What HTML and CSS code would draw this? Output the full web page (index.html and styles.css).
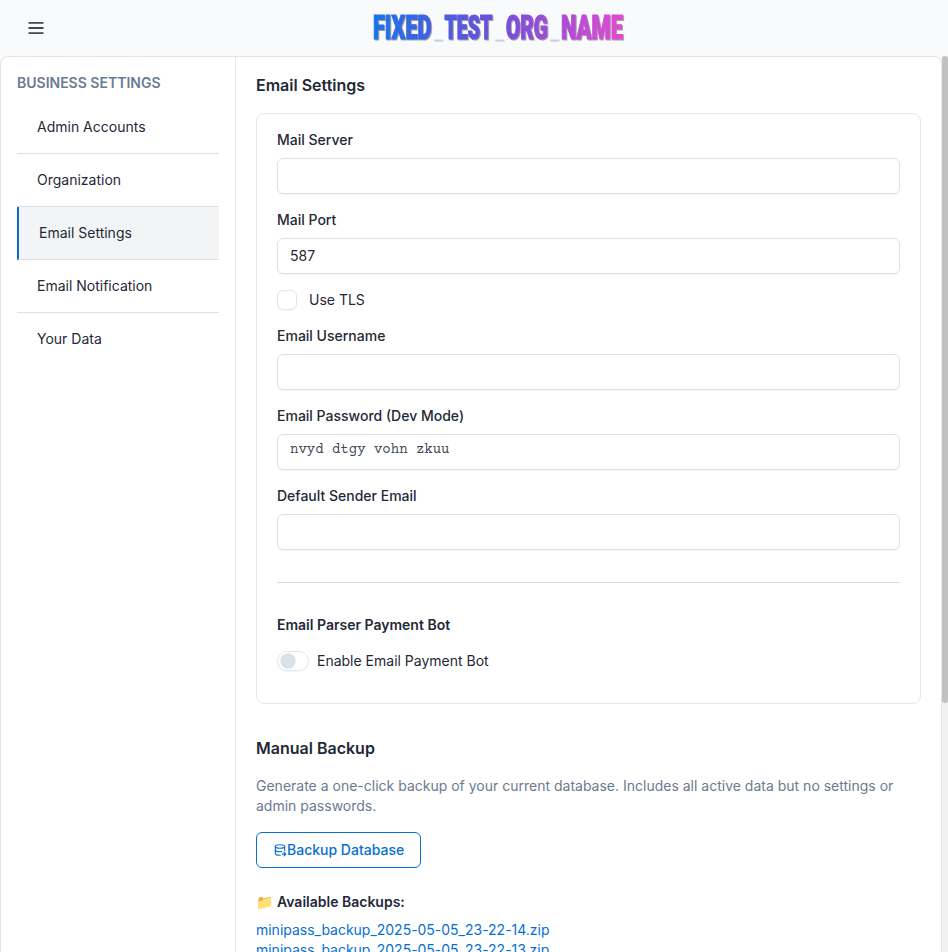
FILE: index.html
```html
<!DOCTYPE html>
<html lang="en">
<head>
<meta charset="utf-8">
<title>Email Settings</title>
<link rel="stylesheet" href="styles.css">
</head>
<body>
<header class="topbar">
  <button class="menu" aria-label="Menu">
    <svg width="24" height="24" viewBox="0 0 24 24" fill="none" stroke="currentColor" stroke-width="1.8"><path d="M4.500 6.800h15M4.500 12h15M4.500 17.200h15"/></svg>
  </button>
  <svg class="brand" width="260" height="50" viewBox="0 0 260 50">
    <defs>
      <linearGradient id="brand-fill" gradientUnits="userSpaceOnUse" x1="4" y1="0" x2="256" y2="0">
        <stop offset="0" stop-color="#1a73e8"/><stop offset=".5" stop-color="#6f4edb"/><stop offset="1" stop-color="#e44ad2"/>
      </linearGradient>
    </defs>
    <text class="word" y="39"><tspan x="5" textLength="58.500" lengthAdjust="spacingAndGlyphs">FIXED</tspan><tspan class="gap" x="66" y="38.500" textLength="9" lengthAdjust="spacingAndGlyphs">_</tspan><tspan x="76.500" y="39" textLength="48" lengthAdjust="spacingAndGlyphs">TEST</tspan><tspan class="gap" x="127" y="38.500" textLength="9" lengthAdjust="spacingAndGlyphs">_</tspan><tspan x="138" y="39" textLength="42" lengthAdjust="spacingAndGlyphs">ORG</tspan><tspan class="gap" x="182" y="38.500" textLength="9" lengthAdjust="spacingAndGlyphs">_</tspan><tspan x="193" y="39" textLength="62" lengthAdjust="spacingAndGlyphs">NAME</tspan></text>
  </svg>
</header>
<div class="shell">
  <div class="card">
    <nav class="sidebar">
      <h4 class="side-title">BUSINESS SETTINGS</h4>
      <a class="item">Admin Accounts</a>
      <a class="item">Organization</a>
      <a class="item active">Email Settings</a>
      <a class="item">Email Notification</a>
      <a class="item">Your Data</a>
    </nav>
    <main class="content">
      <h3 class="heading">Email Settings</h3>
      <section class="panel">
        <div class="field"><label class="label">Mail Server</label><div class="input"></div></div>
        <div class="field"><label class="label">Mail Port</label><div class="input">587</div></div>
        <div class="check"><span class="box"></span>Use TLS</div>
        <div class="field"><label class="label">Email Username</label><div class="input"></div></div>
        <div class="field"><label class="label">Email Password (Dev Mode)</label><div class="input mono">nvyd dtgy vohn zkuu</div></div>
        <div class="field"><label class="label">Default Sender Email</label><div class="input"></div></div>
        <hr class="rule">
        <h4 class="subhead">Email Parser Payment Bot</h4>
        <div class="toggle"><span class="switch"></span>Enable Email Payment Bot</div>
      </section>
      <h3 class="heading backup">Manual Backup</h3>
      <p class="desc">Generate a one-click backup of your current database. Includes all active data but no settings or admin passwords.</p>
      <button class="btn">
        <svg width="14" height="14" viewBox="0 0 24 24" fill="none" stroke="currentColor" stroke-width="2" stroke-linecap="round" stroke-linejoin="round"><ellipse cx="12" cy="6" rx="8" ry="3"/><path d="M4 6v6c0 1.660 3.580 3 8 3 1.120 0 2.180-.09 3.150-.24M20 13V6"/><path d="M4 12v6c0 1.660 3.580 3 8 3 .16 0 .32 0 .48-.01M16 19h6M19 16l3 3-3 3"/></svg>Backup Database</button>
      <h4 class="available"><span class="folder">📁</span> Available Backups:</h4>
      <div class="files">
        <a>minipass_backup_2025-05-05_23-22-14.zip</a>
        <a>minipass_backup_2025-05-05_23-22-13.zip</a>
      </div>
    </main>
  </div>
  <div class="track"><div class="thumb"></div></div>
</div>
</body>
</html>
```

FILE: styles.css
```css
* { box-sizing: border-box; }
body {
  margin: 0;
  height: 952px;
  overflow: hidden;
  display: flex;
  flex-direction: column;
  background: #f9fafb;
  color: #1f2937;
  font: 14px/20px Inter, "Liberation Sans", sans-serif;
}
h3, h4, p { margin: 0; }
.topbar {
  flex: none;
  height: 56px;
  display: grid;
  grid-template-columns: 368px 260px;
  align-items: start;
}
.menu {
  margin: 16px 0 0 24px;
  width: 24px;
  height: 24px;
  padding: 0;
  border: 0;
  background: none;
  color: #3f4857;
}
.brand { display: block; }
.word {
  font: 900 32.5px Roboto, sans-serif;
  fill: url(#brand-fill);
  stroke: url(#brand-fill);
  stroke-width: 1.2px;
  filter: drop-shadow(1px 1px .5px rgba(0, 0, 0, .35));
}
.gap { fill: #8b7bd0; fill-opacity: .3; stroke: none; font-size: 20px; font-weight: 400; }
.shell { flex: 1; min-height: 0; display: flex; }
.card {
  width: 942px;
  display: flex;
  background: #fff;
  border: 1px solid #e2e6ea;
  border-bottom: 0;
  border-radius: 8px 8px 0 0;
  overflow: hidden;
}
.sidebar {
  flex: none;
  width: 235px;
  padding: 16px;
  border-right: 1px solid #e6e7ec;
}
.side-title { font-size: 14px; line-height: 20px; font-weight: 600; color: #6c7a91; margin-bottom: 8px; }
.item { display: block; height: 53px; padding: 16px 20px; border-bottom: 1px solid #dce1e7; }
.item:last-child { border-bottom: 0; }
.active { background: #f3f4f6; border-left: 2px solid #066fd1; }
.content { width: 705px; padding: 16px 20px; }
.heading { font-size: 16px; line-height: 24px; font-weight: 600; }
.panel {
  height: 591px;
  margin-top: 16px;
  padding: 16px 20px;
  border: 1px solid #e6e7ec;
  border-radius: 8px;
}
.field { margin-bottom: 16px; }
.label { display: block; font-weight: 500; margin-bottom: 8px; }
.input {
  height: 36px;
  padding: 7px 12px;
  border: 1px solid #dce1e7;
  border-radius: 6px;
  box-shadow: 0 1px 1px rgba(31, 41, 55, .06);
}
.mono { font: 14px/16px "Courier 10 Pitch", "Courier Prime", "Nimbus Mono PS", "FreeMono", "Liberation Mono", monospace; white-space: pre; color: #3f4857; }
.check { display: flex; gap: 12px; margin-bottom: 16px; }
.box { width: 20px; height: 20px; border: 1px solid #e3e5ea; border-radius: 6px; box-shadow: 0 1px 1px rgba(31, 41, 55, .05); }
.rule { height: 1px; margin: 32px 0; border: 0; background: #d9dcdf; }
.subhead { font-size: 14px; line-height: 20px; font-weight: 600; margin-bottom: 16px; }
.toggle { display: flex; gap: 8px; }
.switch {
  width: 32px;
  height: 20px;
  border: 1px solid #e3e5ea;
  border-radius: 10px;
  background: radial-gradient(circle at 10px 9px, #dce1e7 7.3px, transparent 8px);
  box-shadow: 0 1px 1px rgba(31, 41, 55, .05);
}
.backup { margin-top: 32px; }
.desc { margin: 16px 0; color: #6c7a91; }
.btn {
  display: flex;
  align-items: center;
  width: 165px;
  height: 36px;
  padding: 0 0 0 17px;
  border: 1px solid #066fd1;
  border-radius: 6px;
  background: #fff;
  color: #066fd1;
  font: 500 14px/20px Inter, sans-serif;
}
.btn svg { flex: none; margin: 0 0 0 -1px; }
.available { font-size: 14px; line-height: 20px; font-weight: 600; margin: 24px 0 8px; }
.folder { margin-right: .5px; }
.files { display: flex; flex-direction: column; color: #066fd1; letter-spacing: -.015px; }
.track { width: 6px; background: #f1f1f1; }
.thumb { height: 647px; border-radius: 3px; background: #c1c1c1; }
```
